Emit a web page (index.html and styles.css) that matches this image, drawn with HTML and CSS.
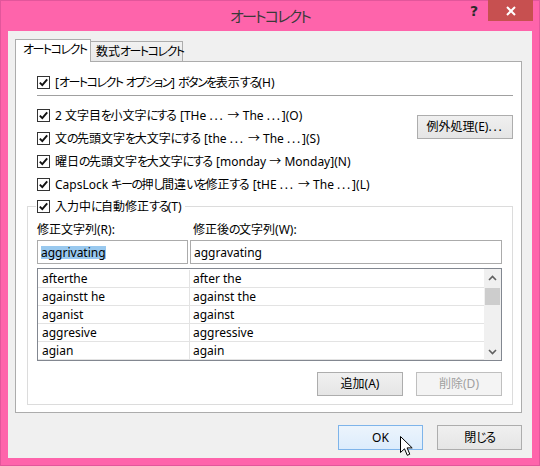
FILE: index.html
```html
<!DOCTYPE html>
<html lang="ja">
<head>
<meta charset="utf-8">
<title>オートコレクト</title>
<link rel="stylesheet" href="styles.css">
</head>
<body>
<div class="window">
  <div class="titlebar">
    <div class="title"><span class="k">オートコレクト</span></div>
    <div class="controls">
      <span class="help">?</span>
      <span class="close"><svg width="10" height="10" viewBox="0 0 10 10"><path d="M1 1 L9 9 M9 1 L1 9" stroke="#fff" stroke-width="2"/></svg></span>
    </div>
  </div>
  <div class="client">
    <div class="tabs">
      <div class="tab active"><span class="k">オートコレクト</span></div>
      <div class="tab">数式<span class="k">オートコレクト</span></div>
    </div>
    <div class="panel">
      <div class="cb-row">
        <svg class="cb" width="13" height="13" viewBox="0 0 13 13"><rect x="0.5" y="0.5" width="12" height="12" fill="#fff" stroke="#333"/><path d="M2.8 6.6 L5.3 9.2 L10.2 3.4" fill="none" stroke="#111" stroke-width="1.9"/></svg>
        <span>[<span class="k">オートコレクト</span> <span class="k">オプション</span>] <span class="k">ボタンを</span>表示<span class="k">する</span>(H)</span>
      </div>
      <div class="sep"></div>
      <div class="opts">
        <div class="opt-list">
          <div class="cb-row">
            <svg class="cb" width="13" height="13" viewBox="0 0 13 13"><rect x="0.5" y="0.5" width="12" height="12" fill="#fff" stroke="#333"/><path d="M2.8 6.6 L5.3 9.2 L10.2 3.4" fill="none" stroke="#111" stroke-width="1.9"/></svg>
            <span>2 文字目<span class="k">を</span>小文字<span class="k">にす</span>る [THe <span class="el">...</span> → The <span class="el">...</span>](O)</span>
          </div>
          <div class="cb-row">
            <svg class="cb" width="13" height="13" viewBox="0 0 13 13"><rect x="0.5" y="0.5" width="12" height="12" fill="#fff" stroke="#333"/><path d="M2.8 6.6 L5.3 9.2 L10.2 3.4" fill="none" stroke="#111" stroke-width="1.9"/></svg>
            <span>文<span class="k">の</span>先頭文字<span class="k">を</span>大文字<span class="k">にす</span>る [the <span class="el">...</span> → The <span class="el">...</span>](S)</span>
          </div>
          <div class="cb-row">
            <svg class="cb" width="13" height="13" viewBox="0 0 13 13"><rect x="0.5" y="0.5" width="12" height="12" fill="#fff" stroke="#333"/><path d="M2.8 6.6 L5.3 9.2 L10.2 3.4" fill="none" stroke="#111" stroke-width="1.9"/></svg>
            <span>曜日<span class="k">の</span>先頭文字<span class="k">を</span>大文字<span class="k">にす</span>る [monday → Monday](N)</span>
          </div>
          <div class="cb-row">
            <svg class="cb" width="13" height="13" viewBox="0 0 13 13"><rect x="0.5" y="0.5" width="12" height="12" fill="#fff" stroke="#333"/><path d="M2.8 6.6 L5.3 9.2 L10.2 3.4" fill="none" stroke="#111" stroke-width="1.9"/></svg>
            <span>CapsLock <span class="k">キーの</span>押<span class="k">し</span>間違<span class="k">いを</span>修正<span class="k">す</span>る [tHE <span class="el">...</span> → The <span class="el">...</span>](L)</span>
          </div>
        </div>
        <button class="btn exc">例外処理(E)<span class="el">...</span></button>
      </div>
      <div class="group">
        <div class="legend">
          <svg class="cb" width="13" height="13" viewBox="0 0 13 13"><rect x="0.5" y="0.5" width="12" height="12" fill="#fff" stroke="#333"/><path d="M2.8 6.6 L5.3 9.2 L10.2 3.4" fill="none" stroke="#111" stroke-width="1.9"/></svg>
          <span>入力中<span class="k">に</span>自動修正<span class="k">する</span>(T)</span>
        </div>
        <div class="fields">
          <div class="field f1">
            <div class="flabel">修正文字列(R):</div>
            <div class="input"><span class="sel">aggrivating</span></div>
          </div>
          <div class="field f2">
            <div class="flabel">修正後<span class="k">の</span>文字列(W):</div>
            <div class="input">aggravating</div>
          </div>
        </div>
        <div class="list">
          <div class="rows">
            <div class="row"><div class="c1">afterthe</div><div class="c2">after the</div></div>
            <div class="row"><div class="c1">againstt he</div><div class="c2">against the</div></div>
            <div class="row"><div class="c1">aganist</div><div class="c2">against</div></div>
            <div class="row"><div class="c1">aggresive</div><div class="c2">aggressive</div></div>
            <div class="row"><div class="c1">agian</div><div class="c2">again</div></div>
          </div>
          <div class="scroll">
            <div class="arrow"><svg width="9" height="6" viewBox="0 0 9 6"><path d="M1 5 L4.5 1.5 L8 5" fill="none" stroke="#606060" stroke-width="1.6"/></svg></div>
            <div class="track"><div class="thumb"></div></div>
            <div class="arrow"><svg width="9" height="6" viewBox="0 0 9 6"><path d="M1 1 L4.5 4.5 L8 1" fill="none" stroke="#606060" stroke-width="1.6"/></svg></div>
          </div>
        </div>
        <div class="grp-btns">
          <button class="btn">追加(A)</button>
          <button class="btn disabled">削除(D)</button>
        </div>
      </div>
    </div>
    <div class="dlg-btns">
      <button class="btn ok">OK<svg class="cursor" width="14" height="21" viewBox="0 0 14 21"><path d="M0.5 0.5 L0.5 16.5 L4.5 12.8 L7.3 19.3 L9.8 18.2 L7.1 11.9 L12.2 11.9 Z" fill="#fff" stroke="#000" stroke-width="1" stroke-linejoin="miter"/></svg></button>
      <button class="btn">閉<span class="k">じる</span></button>
    </div>
  </div>
</div>
</body>
</html>
```

FILE: styles.css
```css
body {
  margin: 0;
}

.window {
  width: 540px;
  height: 466px;
  box-sizing: border-box;
  background: #fe64ab;
  border: 1px solid #e2569b;
  display: flex;
  flex-direction: column;
  font-family: "Noto Sans", "Noto Sans CJK JP", sans-serif;
  font-size: 12px;
  font-feature-settings: "palt";
  color: #000;
}

.k {
  letter-spacing: -1.5px;
}

.el {
  letter-spacing: 1.8px;
}

.titlebar {
  height: 30px;
  display: grid;
  grid-template-columns: 1fr auto 1fr;
  align-items: start;
}

.title {
  grid-column: 2;
  font-size: 15px;
  line-height: 30px;
  color: #3a3a3a;
  white-space: nowrap;
}

.title .k {
  letter-spacing: -1.8px;
}

.controls {
  grid-column: 3;
  justify-self: end;
  display: flex;
  align-items: flex-start;
  margin-right: 6px;
  margin-top: -1px;
}

.help {
  width: 20px;
  margin-right: 4px;
  text-align: center;
  font-family: "DejaVu Sans", sans-serif;
  font-weight: bold;
  font-size: 14px;
  line-height: 22px;
  color: #2b2b2b;
}

.close {
  width: 45px;
  height: 21px;
  background: #c75050;
  display: flex;
  align-items: center;
  justify-content: center;
}

.client {
  height: 427px;
  margin: 0 7px;
  box-sizing: border-box;
  background: #f0f0f0;
  padding: 8px 10px 0 7px;
  display: flex;
  flex-direction: column;
}

.tabs {
  height: 22px;
  display: flex;
  align-items: flex-end;
  position: relative;
  z-index: 1;
}

.tab {
  box-sizing: border-box;
  border: 1px solid #acacac;
  border-bottom: none;
  line-height: 19px;
  height: 20px;
  padding: 0 0 0 5px;
  white-space: nowrap;
  background: linear-gradient(#f2f2f2, #e8e8e8);
}

.tab.active {
  width: 76px;
  height: 23px;
  margin-bottom: -1px;
  background: #fff;
  line-height: 20px;
  padding-left: 7px;
}

.tab + .tab {
  margin-left: -1px;
  width: 93px;
}

.panel {
  height: 352px;
  box-sizing: border-box;
  background: #fff;
  border: 1px solid #acacac;
  padding: 9px 8px 0 21px;
}

.cb-row,
.legend {
  height: 23px;
  display: flex;
  align-items: center;
  gap: 5px;
  line-height: 23px;
  white-space: nowrap;
}

.cb {
  flex: none;
}

.sep {
  height: 1px;
  background: #a0a0a0;
  margin: 1px 0 8px;
}

.opts {
  display: flex;
  justify-content: space-between;
  align-items: flex-start;
}

.btn {
  box-sizing: border-box;
  height: 24px;
  border: 1px solid #adadad;
  background: linear-gradient(#f0f0f0, #e5e5e5);
  font: inherit;
  color: #000;
  padding: 0;
  line-height: 20px;
  white-space: nowrap;
}

.exc {
  width: 96px;
  margin-top: 11px;
}

.group {
  margin: 10px 0 0 -10px;
  border: 1px solid #dcdcdc;
  padding: 0 10px 8px 9px;
}

.legend {
  margin: -12px 0 0 -1px;
  padding: 0 3px 0 1px;
  background: #fff;
  width: max-content;
}

.fields {
  display: flex;
  gap: 2px;
  margin-top: 4px;
}

.field.f1 {
  width: 151px;
}

.field.f2 {
  flex: 1;
}

.flabel {
  line-height: 16px;
  height: 16px;
  margin-bottom: 2px;
}

.f2 .flabel {
  padding-left: 3px;
}

.input {
  box-sizing: border-box;
  height: 24px;
  border: 1px solid #ababab;
  padding-left: 3px;
  line-height: 21px;
  display: flex;
  align-items: center;
}

.sel {
  background: #99c9ef;
  line-height: 13px;
  height: 13px;
  display: inline-block;
}

.list {
  margin-top: 4px;
  height: 93px;
  box-sizing: border-box;
  border: 1px solid #828790;
  display: flex;
  overflow: hidden;
}

.rows {
  flex: 1;
  padding-top: 1px;
}

.row {
  display: flex;
  height: 18px;
  box-sizing: border-box;
  border-bottom: 1px solid #e3e3e3;
  line-height: 17px;
}

.c1 {
  width: 152px;
  box-sizing: border-box;
  border-right: 1px solid #e3e3e3;
  padding-left: 4px;
}

.c2 {
  flex: 1;
  padding-left: 3px;
}

.scroll {
  width: 17px;
  background: #f0f0f0;
  display: flex;
  flex-direction: column;
}

.arrow {
  height: 17px;
  display: flex;
  align-items: center;
  justify-content: center;
}

.track {
  flex: 1;
  padding: 2px 1px 0;
}

.thumb {
  height: 17px;
  background: #cdcdcd;
}

.grp-btns {
  display: flex;
  justify-content: flex-end;
  gap: 13px;
  margin-top: 11px;
}

.grp-btns .btn {
  width: 86px;
}

.btn.disabled {
  background: #f4f4f4;
  border-color: #bfbfbf;
  color: #a0a0a0;
}

.dlg-btns {
  display: flex;
  justify-content: flex-end;
  gap: 14px;
  margin-top: 12px;
}

.dlg-btns .btn {
  width: 85px;
  height: 25px;
}

.btn.ok {
  position: relative;
  border-color: #7eb4ea;
  background: linear-gradient(#ecf4fc, #dcecfc);
}

.cursor {
  position: absolute;
  left: 61px;
  top: 10px;
}
```
